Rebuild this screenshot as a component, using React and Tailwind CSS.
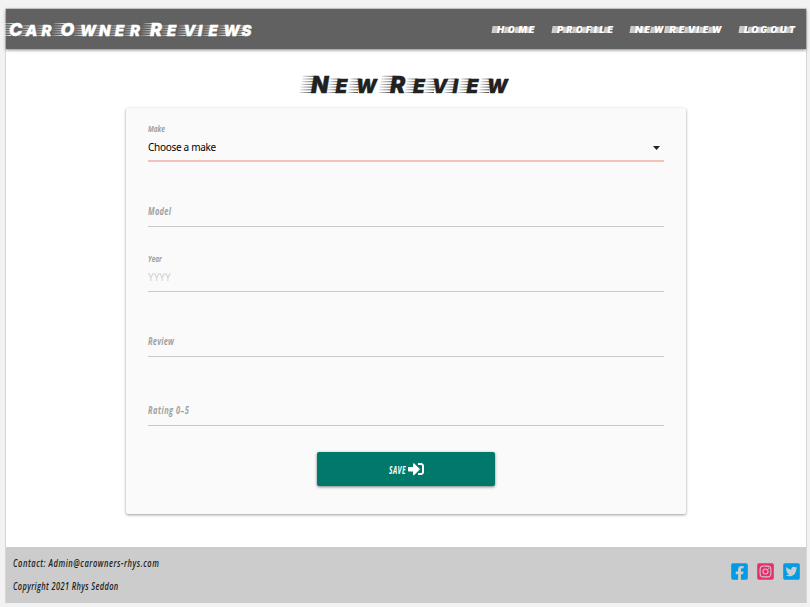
import { FaFacebookSquare, FaInstagramSquare, FaTwitterSquare, FaSignInAlt } from "react-icons/fa";
import clsx from "clsx";

// Racing-style lettering: small caps in a heavy slant with streaks behind each glyph.
function SpeedText({ text, xs, width, height, base, big, small, trail, step, color, id, solid, className }) {
  const chars = text.split("");
  const words = text.split(" ");
  return (
    <svg width={width} height={height} viewBox={`0 0 ${width} ${height}`} className={clsx("block shrink-0 overflow-visible", className)}>
      <defs>
        <linearGradient id={id} x1="0" x2="1">
          <stop offset="0" stopColor={color} stopOpacity={solid ? 0.75 : 0.15} />
          <stop offset="1" stopColor={color} stopOpacity={solid ? 0.5 : 0.85} />
        </linearGradient>
      </defs>
      {chars.map((c, i) => {
        if (c === " ") return null;
        const first = i === 0 || chars[i - 1] === " ";
        const cap = (first ? big : small) * 0.727;
        const len = first ? trail : trail * 0.74;
        const x = xs[i];
        if (solid) {
          return (
            <path key={i} fill={`url(#${id})`} d={`M${x - len + 1.2} ${base - cap}H${x + 3}L${x + 2} ${base}H${x - len}Z`} />
          );
        }
        const count = Math.floor(cap / step) + 1;
        return Array.from({ length: count }, (_, k) => (
          <rect key={`${i}-${k}`} x={x - len + k * step * 0.2} y={base - 1 - k * step} width={len + 2} height={1} fill={`url(#${id})`} />
        ));
      })}
      <text x={xs.join(" ")} y={base} fill={color} fontSize={small} className="font-['Inter'] font-black italic uppercase" stroke={color} strokeWidth={solid ? 0.2 : 0.3}>
        {words.map((w, i) => (
          <tspan key={i}>
            {i > 0 ? " " : ""}
            <tspan fontSize={big}>{w[0]}</tspan>
            {w.slice(1)}
          </tspan>
        ))}
      </text>
    </svg>
  );
}

const nav = [
  { text: "Home", width: 43, xs: [4, 15, 25.5, 36] },
  { text: "Profile", width: 62, xs: [5, 14.5, 24, 34, 42, 47.5, 55.5] },
  { text: "New Review", width: 93, xs: [5, 14.5, 24, 34, 39.5, 49, 58, 66.5, 73, 82] },
  { text: "Logout", width: 57, xs: [5, 12.5, 21.5, 31.5, 41, 50] },
];

function Narrow({ children, className }) {
  return (
    <span className={clsx("block w-max origin-left whitespace-nowrap font-['Open_Sans',sans-serif] italic", className)}>{children}</span>
  );
}

export default function App() {
  return (
    <div className="h-[607px] w-[810px] overflow-hidden bg-[#f2f2f2] px-[5px] pt-2">
      <div className="flex h-[595px] w-[802px] flex-col border-x border-t border-[#d5d5d5] bg-white">
        <header className="flex h-10 shrink-0 items-center justify-between bg-[#616161] pr-[10px] shadow-[0_1px_3px_rgba(0,0,0,0.5)]">
          <SpeedText id="brand" text="Car Owner Reviews" width={250} height={40} base={27} big={17.8} small={14.9} trail={9} step={2.4} color="#ffffff"
            xs={[3, 19.5, 35.5, 50, 54.5, 74, 93, 109, 124, 138, 144, 161, 177.5, 192, 202.5, 217.5, 235.5]} />
          <nav className="flex gap-4">
            {nav.map((n) => (
              <a key={n.text} href="#">
                <SpeedText id={"nav" + n.text[0]} {...n} height={40} base={24} big={9.5} small={8.6} trail={5.5} step={1} color="#ffffff" solid />
              </a>
            ))}
          </nav>
        </header>

        <main className="flex h-[498px] flex-col items-center">
          <h1 className="mt-5">
            <SpeedText id="title" text="New Review" width={212} height={39} base={24} big={22.8} small={19.2} trail={11.5} step={2.7} color="#212121"
              xs={[11, 35.5, 56, 78, 90, 113, 132, 152.5, 166.5, 187]} />
          </h1>
          <form className="h-[406px] w-[560px] rounded-[2px] bg-[#fafafa] px-[22px] shadow-[0_1px_3px_rgba(0,0,0,0.4)]">
            <div className="flex h-[54px] flex-col border-b-2 border-[#f5bfbc] pt-[14px]">
              <Narrow className="h-[14px] scale-x-[0.72] text-[9px] font-bold leading-[14px] text-[#9e9e9e]">Make</Narrow>
              <div className="flex h-[23px] items-center justify-between pr-1 font-['Noto_Sans',sans-serif] text-[10px] text-black">
                <span className="tracking-[-0.3px]">Choose a make</span>
                <svg width="7" height="4" viewBox="0 0 7 4" className="block"><path d="M0 0H7L3.5 4Z" fill="#222" /></svg>
              </div>
            </div>
            <div className="flex h-[65px] flex-col justify-end border-b border-[#c9c9c9] pb-[7px]">
              <Narrow className="scale-x-[0.75] text-[10px] font-bold leading-[15px] tracking-[0.4px] text-[#a2a2a2]">Model</Narrow>
            </div>
            <div className="flex h-[65px] flex-col border-b border-[#c9c9c9] pt-[25px]">
              <Narrow className="h-[14px] scale-x-[0.72] text-[9px] font-bold leading-[14px] text-[#9e9e9e]">Year</Narrow>
              <span className="flex h-[23px] items-center font-['Noto_Sans',sans-serif] text-[10px] text-[#d1d1d1]">YYYY</span>
            </div>
            <div className="flex h-[65px] flex-col justify-end border-b border-[#c9c9c9] pb-[7px]">
              <Narrow className="scale-x-[0.75] text-[10px] font-bold leading-[15px] tracking-[0.3px] text-[#a2a2a2]">Review</Narrow>
            </div>
            <div className="flex h-[69px] flex-col justify-end border-b border-[#c9c9c9] pb-[7px]">
              <Narrow className="scale-x-[0.75] text-[10px] font-bold leading-[15px] tracking-[0.6px] text-[#a2a2a2]">Rating 0–5</Narrow>
            </div>
            <button type="button" className="ml-[169px] mt-[26px] flex h-[34px] w-[178px] items-center justify-center rounded-[2px] bg-[#00796b] text-white shadow-[0_1px_3px_rgba(0,0,0,0.5)]">
              <span className="block w-[19px]">
                <Narrow className="scale-x-[0.66] pt-[3px] text-[10px] font-bold tracking-[0.7px]">SAVE</Narrow>
              </span>
              <FaSignInAlt size={16} />
            </button>
          </form>
        </main>

        <footer className="flex h-14 shrink-0 items-start justify-between bg-[#cccccc] pl-[7px] pr-[5px]">
          <div className="pt-[8px] text-[#212121]">
            <Narrow className="h-[23px] scale-x-[0.755] text-[10px] font-semibold leading-[16px] tracking-[0.7px]">Contact: Admin@carowners-rhys.com</Narrow>
            <Narrow className="scale-x-[0.743] text-[10px] font-semibold leading-[16px] tracking-[0.5px]">Copyright 2021 Rhys Seddon</Narrow>
          </div>
          <div className="flex gap-[7px] pt-[15px]">
            <FaFacebookSquare size={19} color="#039be5" />
            <FaInstagramSquare size={19} color="#e6306c" />
            <FaTwitterSquare size={19} color="#039be5" />
          </div>
        </footer>
      </div>
    </div>
  );
}
